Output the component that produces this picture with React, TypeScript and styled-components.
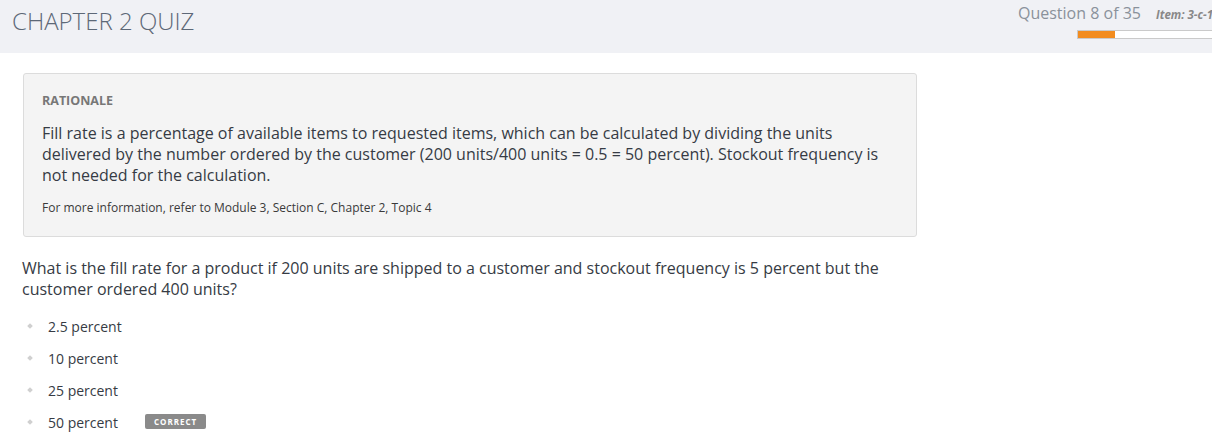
import React from "react";
import styled, { createGlobalStyle } from "styled-components";

const Global = createGlobalStyle`
  html, body { margin: 0; padding: 0; background: #fff; }
  body { font-family: "Open Sans", "Liberation Sans", sans-serif; color: #333; overflow: hidden; }
  * { box-sizing: border-box; }
`;

const Header = styled.header`
  height: 53px;
  background: #f0f1f5;
  display: flex;
  justify-content: space-between;
  align-items: flex-start;
  padding-left: 12px;
  overflow: hidden;
`;

const Title = styled.h1`
  margin: 4px 0 0;
  font-size: 24px;
  font-weight: 300;
  color: #5d6877;
  letter-spacing: 0;
`;

const Meta = styled.div`
  display: flex;
  flex-direction: column;
  align-items: flex-start;
  width: 194px;
  flex-shrink: 0;
  padding-top: 2px;
`;

const MetaRow = styled.div`
  display: flex;
  align-items: baseline;
  white-space: nowrap;
  gap: 15px;
`;

const Counter = styled.span`
  font-size: 16px;
  color: #8a919b;
`;

const ItemCode = styled.span`
  font-size: 11.5px;
  font-style: italic;
  font-weight: 700;
  color: #888;
`;

const Progress = styled.div`
  margin: 6px 0 0 59px;
  width: 150px;
  height: 9px;
  border: 1px solid #cacaca;
  background: #fff;
  display: flex;
`;

const ProgressFill = styled.div`
  background: #f28c1f;
  height: 100%;
`;

const Main = styled.main`
  padding: 20px 0 0 22px;
`;

const Rationale = styled.section`
  margin-left: 1px;
  width: 894px;
  background: #f4f4f4;
  border: 1px solid #dcdcdc;
  border-radius: 3px;
  padding: 19px 18px 20px;
`;

const RationaleLabel = styled.div`
  font-size: 12.5px;
  font-weight: 700;
  color: #777;
  line-height: 16px;
`;

const RationaleText = styled.p`
  margin: 14px 0 0;
  font-size: 16px;
  line-height: 21px;
  color: #363b44;
`;

const RefNote = styled.p`
  margin: 14px 0 0;
  font-size: 12px;
  line-height: 16px;
  color: #3a3a3a;
`;

const Question = styled.p`
  margin: 21px 0 0;
  width: 880px;
  font-size: 16px;
  line-height: 20.5px;
  color: #363b44;
`;

const Options = styled.ul`
  list-style: none;
  margin: 17px 0 0;
  padding: 0;
  display: flex;
  flex-direction: column;
  gap: 12px;
`;

const Option = styled.li`
  display: flex;
  align-items: center;
  height: 20px;
  font-size: 14px;
  color: #363b44;
`;

const Bullet = styled.span`
  width: 4px;
  height: 4px;
  margin: 0 16px 0 6px;
  background: #d0d0d0;
  transform: rotate(45deg);
  flex-shrink: 0;
`;

const OptionText = styled.span`
  width: 97px;
`;

const Badge = styled.span`
  background: #8a8a8a;
  color: #fff;
  font-size: 8px;
  font-weight: 700;
  letter-spacing: 1px;
  padding: 0 9px;
  height: 15px;
  line-height: 15px;
  border-radius: 2px;
  margin-top: -2px;
`;

const options = [
  { label: "2.5 percent" },
  { label: "10 percent" },
  { label: "25 percent" },
  { label: "50 percent", correct: true },
];

export default function App() {
  const current = 8;
  const total = 35;
  return (
    <>
      <Global />
      <Header>
        <Title>CHAPTER 2 QUIZ</Title>
        <Meta>
          <MetaRow>
            <Counter>Question {current} of {total}</Counter>
            <ItemCode>Item: 3-c-1</ItemCode>
          </MetaRow>
          <Progress>
            <ProgressFill style={{ width: `${(38 / 150) * 100}%` }} />
          </Progress>
        </Meta>
      </Header>
      <Main>
        <Rationale>
          <RationaleLabel>RATIONALE</RationaleLabel>
          <RationaleText>
            Fill rate is a percentage of available items to requested items, which can be calculated by dividing the units
            delivered by the number ordered by the customer (200 units/400 units = 0.5 = 50 percent). Stockout frequency is
            not needed for the calculation.
          </RationaleText>
          <RefNote>For more information, refer to Module 3, Section C, Chapter 2, Topic 4</RefNote>
        </Rationale>
        <Question>
          What is the fill rate for a product if 200 units are shipped to a customer and stockout frequency is 5 percent but the
          customer ordered 400 units?
        </Question>
        <Options>
          {options.map((o) => (
            <Option key={o.label}>
              <Bullet />
              <OptionText>{o.label}</OptionText>
              {o.correct && <Badge>CORRECT</Badge>}
            </Option>
          ))}
        </Options>
      </Main>
    </>
  );
}
